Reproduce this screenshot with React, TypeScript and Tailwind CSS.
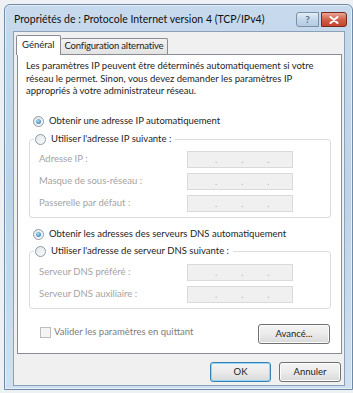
import React from 'react';

const font = { fontFamily: 'Lato, "Noto Sans", sans-serif' };

function Radio({ checked }: { checked?: boolean }) {
  return (
    <span className="inline-flex h-[11px] w-[11px] shrink-0 items-center justify-center rounded-full border border-[#8f9aa6] bg-gradient-to-br from-[#e2e6ea] to-[#fbfbfb]">
      {checked && <span className="h-[5px] w-[5px] rounded-full bg-[radial-gradient(circle_at_40%_35%,#a8dcf7,#1f6fb2)]" />}
    </span>
  );
}

function IpBox() {
  return (
    <div className="flex h-[17px] w-[106px] items-center border border-[#dadada] bg-[#f0f0f0] text-[9px] leading-none text-[#b0b0b0]">
      <span className="ml-[27px]">.</span>
      <span className="ml-[24px]">.</span>
      <span className="ml-[24px]">.</span>
    </div>
  );
}

function Row({ label }: { label: string }) {
  return (
    <div className="flex h-[17px] items-center">
      <span className="w-[157px] pl-[9px] text-[#a3a3a3]">{label}</span>
      <IpBox />
    </div>
  );
}

function Button({ children, focused }: { children: React.ReactNode; focused?: boolean }) {
  return (
    <div
      className={`flex h-[20px] items-center justify-center rounded-[3px] border bg-gradient-to-b from-[#f4f4f4] via-[#ebebeb] to-[#d9d9d9] text-[#1e1e1e] ${
        focused ? 'border-[#3c7fb1] shadow-[inset_0_0_0_1px_#8fd6f7]' : 'border-[#707070] shadow-[inset_0_0_0_1px_#fcfcfc]'
      }`}
    >
      {children}
    </div>
  );
}

export default function App() {
  return (
    <div className="h-[393px] w-[353px] overflow-hidden bg-[#eef1f4] pl-[4px] pt-[4px] text-[9.5px] leading-[12.5px]" style={font}>
      <div className="flex h-[386px] w-[349px] flex-col rounded-t-[6px] border border-[#6d8aa8] bg-gradient-to-b from-[#c7d9ec] via-[#bfd3e8] to-[#cfe0f1] pl-[8px] pr-[7px] pb-[3px] shadow-[inset_0_0_0_1px_#e6eef7]">
        {/* title bar */}
        <div className="flex h-[26px] shrink-0 items-start">
          <span className="mt-[7px] ml-[1px] whitespace-nowrap text-[10.5px] leading-[14px] text-[#111]">Propriétés de : Protocole Internet version 4 (TCP/IPv4)</span>
          <div className="ml-auto mr-[-2px] mt-[7px] flex">
            <div className="flex h-[15px] w-[23px] items-center justify-center rounded-l-[3px] border border-[#7890aa] bg-gradient-to-b from-[#e3ecf5] via-[#c5d7ea] to-[#b5cbe2] text-[10px] font-bold text-[#5c6f85]">?</div>
            <div className="ml-[2px] flex h-[15px] w-[26px] items-center justify-center rounded-r-[3px] border border-[#7a2a1d] bg-gradient-to-b from-[#e8a394] via-[#d0614b] to-[#c4432c]">
              <svg width="10" height="8" viewBox="0 0 10 8">
                <path d="M1.5 1 L8.5 7 M8.5 1 L1.5 7" stroke="#fff" strokeWidth="2" strokeLinecap="round" />
              </svg>
            </div>
          </div>
        </div>

        {/* client area */}
        <div className="flex flex-1 flex-col border border-[#8ba0b9] bg-[#f0f0f0] pl-[3px] pr-[2px] pt-[3px]">
          {/* tabs */}
          <div className="ml-[-1px] flex h-[19px] items-end">
            <div className="relative z-10 mb-[-1px] flex h-[20px] items-center rounded-t-[2px] border border-b-0 border-[#898c95] bg-white px-[5px] text-[#1e1e1e]">Général</div>
            <div className="flex h-[16px] items-center rounded-t-[2px] border border-b-0 border-l-0 border-[#898c95] bg-gradient-to-b from-[#f2f2f2] to-[#e3e3e3] px-[4px] tracking-[-0.2px] text-[#1e1e1e]">Configuration alternative</div>
          </div>
          {/* panel */}
          <div className="flex h-[300px] flex-col border border-[#898c95] bg-white px-[8px] pt-[5px]">
            <p className="whitespace-nowrap text-[#1e1e1e]">
              Les paramètres IP peuvent être déterminés automatiquement si votre
              <br />
              réseau le permet. Sinon, vous devez demander les paramètres IP
              <br />
              appropriés à votre administrateur réseau.
            </p>

            <div className="mt-[17px] flex h-[13px] items-center gap-[5px] pl-[7px]">
              <Radio checked />
              <span className="text-[#1e1e1e]">Obtenir une adresse IP automatiquement</span>
            </div>

            <div className="relative mt-[11px] ml-[3px] mr-[2px] h-[79px] rounded-[3px] border border-[#dcdcdc]">
              <div className="absolute left-[4px] top-[-7px] flex h-[13px] items-center gap-[5px] bg-white px-[1px] pr-[4px]">
                <Radio />
                <span className="text-[#1e1e1e]">Utiliser l'adresse IP suivante :</span>
              </div>
              <div className="flex flex-col gap-[5px] pt-[11px]">
                <Row label="Adresse IP :" />
                <Row label="Masque de sous-réseau :" />
                <Row label="Passerelle par défaut :" />
              </div>
            </div>

            <div className="mt-[10px] flex h-[13px] items-center gap-[5px] pl-[7px]">
              <Radio checked />
              <span className="text-[#1e1e1e]">Obtenir les adresses des serveurs DNS automatiquement</span>
            </div>

            <div className="relative mt-[10px] ml-[3px] mr-[2px] h-[58px] rounded-[3px] border border-[#dcdcdc]">
              <div className="absolute left-[4px] top-[-7px] flex h-[13px] items-center gap-[5px] bg-white px-[1px] pr-[4px]">
                <Radio />
                <span className="text-[#1e1e1e]">Utiliser l'adresse de serveur DNS suivante :</span>
              </div>
              <div className="flex flex-col gap-[5px] pt-[12px]">
                <Row label="Serveur DNS préféré :" />
                <Row label="Serveur DNS auxiliaire :" />
              </div>
            </div>

            <div className="mt-[16px] flex h-[19px] items-center pl-[14px]">
              <span className="mb-[3px] h-[11px] w-[11px] border border-[#bdbdbd] bg-[#f4f4f4]" />
              <span className="mb-[3px] ml-[3px] text-[#7d7d7d]">Valider les paramètres en quittant</span>
              <div className="ml-auto mr-[3px] w-[72px]">
                <Button>Avancé...</Button>
              </div>
            </div>
          </div>

          {/* footer */}
          <div className="mt-[8px] flex justify-end gap-[8px] pr-[1px]">
            <div className="w-[61px]">
              <Button focused>OK</Button>
            </div>
            <div className="w-[62px]">
              <Button>Annuler</Button>
            </div>
          </div>
        </div>
      </div>
    </div>
  );
}
